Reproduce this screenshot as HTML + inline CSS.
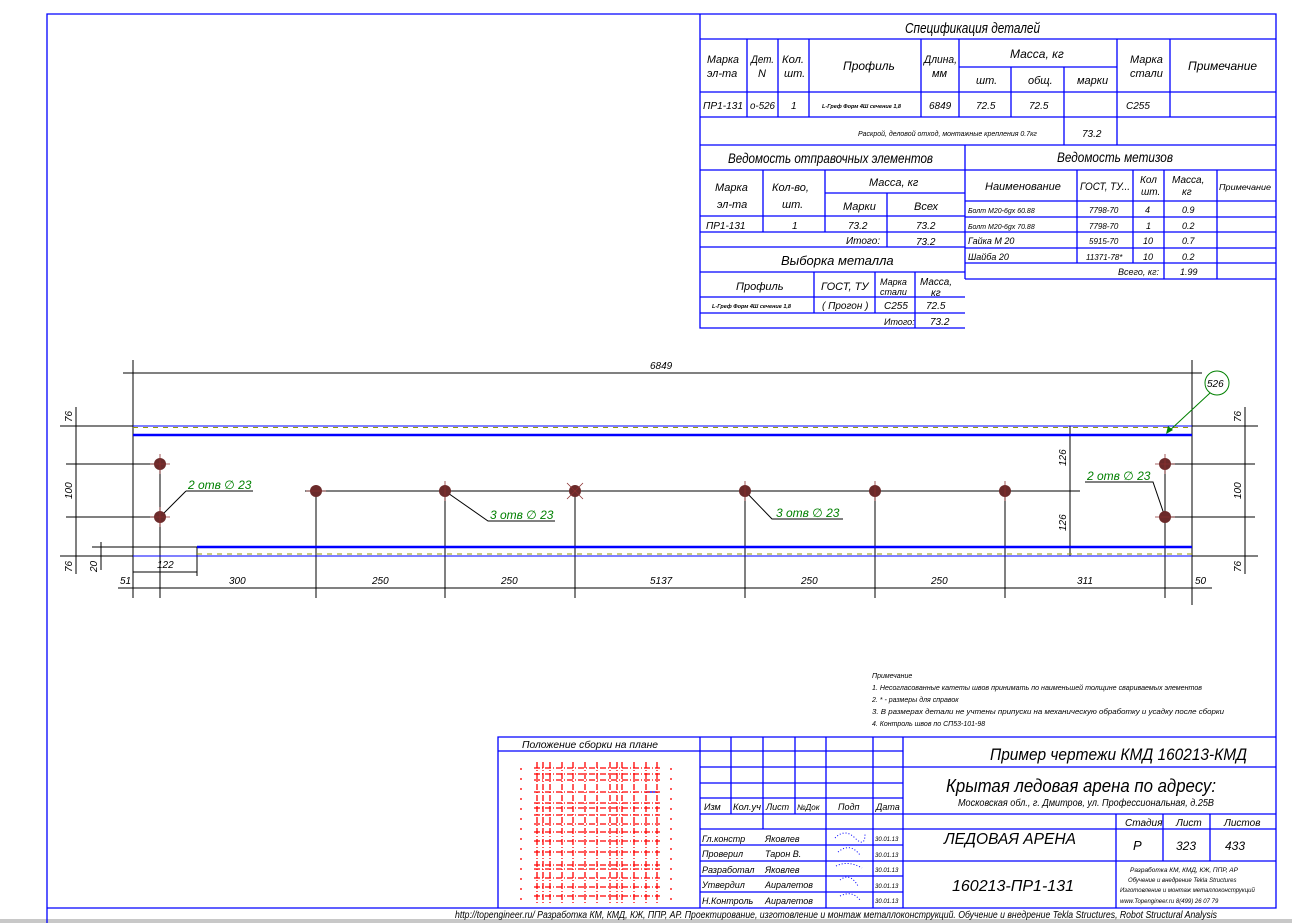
<!DOCTYPE html>
<html><head><meta charset="utf-8"><style>
html,body{margin:0;padding:0;background:#fff;}
svg{display:block}
text{font-family:"Liberation Sans","DejaVu Sans",sans-serif;font-style:italic;fill:#000}
.b{stroke:#0000ff;stroke-width:1.3;fill:none}
.k{stroke:#000;stroke-width:1;fill:none}
.r{stroke:#f00;stroke-width:1.3;stroke-dasharray:6 2 1 2;fill:none}
.g{fill:#008000}
</style></head><body>
<svg width="1292" height="923" viewBox="0 0 1292 923" xmlns="http://www.w3.org/2000/svg">
<rect x="0" y="919" width="1292" height="4" fill="#c8c8c8"/>
<path class="b" d="M47 923 V14 H1276 V908 H47"/>
<g class="b">
<path d="M700 14 V328 H965 M700 39 H1276 M700 92 H1276 M700 117 H1276 M700 145 H1276 M959 67 H1117"/>
<path d="M747 39 V117 M778 39 V117 M809 39 V117 M921 39 V117 M959 39 V117 M1011 67 V117 M1064 67 V145 M1117 39 V145 M1170 39 V117"/>
<path d="M965 145 V279 M700 170 H1276"/>
<path d="M700 216 H965 M700 232 H965 M700 247 H965 M700 272 H965 M700 297 H965 M700 313 H965 M825 193 H965"/>
<path d="M763 170 V232 M825 170 V232 M887 193 V247 M814 272 V313 M875 272 V313 M915 272 V328"/>
<path d="M965 201 H1276 M965 217 H1276 M965 232 H1276 M965 248 H1276 M965 263 H1276 M965 279 H1276"/>
<path d="M1077 170 V263 M1133 170 V263 M1164 170 V279 M1217 170 V279"/>
</g>
<g font-size="13">
<text x="905" y="33" font-size="15" textLength="135" lengthAdjust="spacingAndGlyphs">Спецификация деталей</text>
<text x="707" y="63" font-size="11" textLength="32" lengthAdjust="spacingAndGlyphs">Марка</text><text x="707" y="77" font-size="11">эл-та</text>
<text x="751" y="63" font-size="11" textLength="23" lengthAdjust="spacingAndGlyphs">Дет.</text><text x="758" y="77" font-size="11">N</text>
<text x="782" y="63" font-size="11" textLength="22" lengthAdjust="spacingAndGlyphs">Кол.</text><text x="784" y="77" font-size="11">шт.</text>
<text x="843" y="70" font-size="12">Профиль</text>
<text x="924" y="63" font-size="11" textLength="33" lengthAdjust="spacingAndGlyphs">Длина,</text><text x="932" y="77" font-size="11">мм</text>
<text x="1010" y="58" font-size="12">Масса, кг</text>
<text x="976" y="84" font-size="11">шт.</text><text x="1028" y="84" font-size="11">общ.</text><text x="1077" y="84" font-size="11">марки</text>
<text x="1130" y="63" font-size="11">Марка</text><text x="1130" y="77" font-size="11">стали</text>
<text x="1188" y="70" font-size="12">Примечание</text>
<text x="703" y="109" font-size="10" textLength="40" lengthAdjust="spacingAndGlyphs">ПР1-131</text><text x="750" y="109" font-size="10" textLength="25" lengthAdjust="spacingAndGlyphs">о-526</text><text x="791" y="109" font-size="10">1</text>
<text x="822" y="108" font-size="5.5" font-weight="bold">L-Греф Форм 4Ш сечение 1,8</text>
<text x="929" y="109" font-size="10">6849</text><text x="976" y="109" font-size="10">72.5</text><text x="1029" y="109" font-size="10">72.5</text><text x="1126" y="109" font-size="10">С255</text>
<text x="858" y="136" font-size="7">Раскрой, деловой отход, монтажные крепления 0.7кг</text>
<text x="1082" y="137" font-size="10">73.2</text>
<text x="728" y="163" font-size="14" textLength="205" lengthAdjust="spacingAndGlyphs">Ведомость отправочных элементов</text>
<text x="1057" y="162" font-size="14" textLength="116" lengthAdjust="spacingAndGlyphs">Ведомость метизов</text>
<text x="715" y="191" font-size="11">Марка</text><text x="717" y="208" font-size="11">эл-та</text>
<text x="772" y="191" font-size="11">Кол-во,</text><text x="782" y="208" font-size="11">шт.</text>
<text x="869" y="186" font-size="11">Масса, кг</text>
<text x="843" y="210" font-size="11">Марки</text><text x="914" y="210" font-size="11">Всех</text>
<text x="706" y="229" font-size="10">ПР1-131</text><text x="792" y="229" font-size="10">1</text><text x="848" y="229" font-size="10">73.2</text><text x="916" y="229" font-size="10">73.2</text>
<text x="846" y="244" font-size="10">Итого:</text><text x="916" y="245" font-size="10">73.2</text>
<text x="781" y="265" font-size="13">Выборка металла</text>
<text x="736" y="290" font-size="11">Профиль</text>
<text x="821" y="290" font-size="11">ГОСТ, ТУ</text>
<text x="880" y="285" font-size="9">Марка</text><text x="880" y="295" font-size="9">стали</text>
<text x="920" y="285" font-size="10" textLength="32" lengthAdjust="spacingAndGlyphs">Масса,</text><text x="931" y="296" font-size="10">кг</text>
<text x="712" y="308" font-size="5.5" font-weight="bold">L-Греф Форм 4Ш сечение 1,8</text>
<text x="822" y="309" font-size="10">( Прогон )</text><text x="884" y="309" font-size="10">С255</text><text x="926" y="309" font-size="10">72.5</text>
<text x="884" y="325" font-size="9">Итого:</text><text x="930" y="325" font-size="10">73.2</text>
<text x="985" y="190" font-size="11">Наименование</text>
<text x="1080" y="190" font-size="11" textLength="50" lengthAdjust="spacingAndGlyphs">ГОСТ, ТУ...</text>
<text x="1140" y="183" font-size="10">Кол</text><text x="1141" y="195" font-size="10">шт.</text>
<text x="1172" y="183" font-size="10">Масса,</text><text x="1182" y="195" font-size="10">кг</text>
<text x="1219" y="190" font-size="8" textLength="52" lengthAdjust="spacingAndGlyphs">Примечание</text>
<text x="968" y="213" font-size="7">Болт М20-6gх 60.88</text><text x="1089" y="213" font-size="8">7798-70</text><text x="1145" y="213" font-size="9">4</text><text x="1182" y="213" font-size="9">0.9</text>
<text x="968" y="229" font-size="7">Болт М20-6gх 70.88</text><text x="1089" y="229" font-size="8">7798-70</text><text x="1146" y="229" font-size="9">1</text><text x="1182" y="229" font-size="9">0.2</text>
<text x="968" y="244" font-size="9">Гайка М 20</text><text x="1089" y="244" font-size="8">5915-70</text><text x="1143" y="244" font-size="9">10</text><text x="1182" y="244" font-size="9">0.7</text>
<text x="968" y="260" font-size="9">Шайба 20</text><text x="1086" y="260" font-size="8">11371-78*</text><text x="1143" y="260" font-size="9">10</text><text x="1182" y="260" font-size="9">0.2</text>
<text x="1118" y="275" font-size="9">Всего, кг:</text><text x="1180" y="275" font-size="9">1.99</text>
</g>
<g class="k">
<path d="M133 360 V598 M1192 360 V605 M123 373 H1202"/>
<path d="M60 426 H133 M1192 426 H1258 M60 556 H133 M1192 556 H1258"/>
<path d="M76 407 V574 M1245 407 V574 M66 464 H160 M66 517 H160 M1165 464 H1255 M1165 517 H1255"/>
<path d="M305 491 H1080 M1070 426 V556 M1060 426 H1080 M1060 556 H1080"/>
<path d="M92 547 H197 M101 542 V570 M133 572 H197 M197 547 V576"/>
<path d="M118 588 H1212 M160 464 V598 M316 491 V598 M445 491 V598 M575 491 V598 M745 491 V598 M875 491 V598 M1005 491 V598 M1165 464 V598"/>
<path d="M186 491 H253 M186 491 L160 517 M445 491 L488 521 H555 M745 491 L772 519 H843 M1085 482 H1153 L1165 517"/>
</g>
<g stroke="#0000ff" fill="none">
<path d="M133 426 H1192 M133 556 H1192" stroke-width="1"/>
<path d="M133 435 H1192 M197 547 H1192" stroke-width="2.5"/>
</g>
<path d="M133 427.5 H1192 M197 554 H1192" stroke="#9a9a00" stroke-width="1" stroke-dasharray="5 5"/>
<g fill="#6b2a2a">
<circle cx="160" cy="464" r="6"/><circle cx="160" cy="517" r="6"/>
<circle cx="316" cy="491" r="6"/><circle cx="445" cy="491" r="6"/><circle cx="575" cy="491" r="6"/>
<circle cx="745" cy="491" r="6"/><circle cx="875" cy="491" r="6"/><circle cx="1005" cy="491" r="6"/>
<circle cx="1165" cy="464" r="6"/><circle cx="1165" cy="517" r="6"/>
</g>
<g stroke="#8b3030" stroke-width="0.8">
<path d="M150 464 H170 M160 454 V474 M150 517 H170 M160 507 V527 M306 491 H326 M445 481 V501 M745 481 V501 M875 481 V501 M1005 481 V501 M567 483 L583 499 M583 483 L567 499 M1155 464 H1175 M1165 454 V474 M1155 517 H1175"/>
</g>
<g font-size="10" font-style="normal">
<text x="650" y="369">6849</text>
<text x="120" y="584">51</text><text x="157" y="568">122</text><text x="229" y="584">300</text>
<text x="372" y="584">250</text><text x="501" y="584">250</text><text x="650" y="584">5137</text>
<text x="801" y="584">250</text><text x="931" y="584">250</text><text x="1077" y="584">311</text><text x="1195" y="584">50</text>
<text transform="translate(72,422) rotate(-90)">76</text>
<text transform="translate(72,499) rotate(-90)">100</text>
<text transform="translate(72,572) rotate(-90)">76</text>
<text transform="translate(97,572) rotate(-90)">20</text>
<text transform="translate(1241,422) rotate(-90)">76</text>
<text transform="translate(1241,499) rotate(-90)">100</text>
<text transform="translate(1241,572) rotate(-90)">76</text>
<text transform="translate(1066,466) rotate(-90)">126</text>
<text transform="translate(1066,531) rotate(-90)">126</text>
</g>
<g font-size="12" font-style="normal">
<text x="188" y="489" class="g">2 отв ∅ 23</text>
<text x="490" y="519" class="g">3 отв ∅ 23</text>
<text x="776" y="517" class="g">3 отв ∅ 23</text>
<text x="1087" y="480" class="g">2 отв ∅ 23</text>
</g>
<circle cx="1217" cy="383" r="12" fill="none" stroke="#008000"/>
<text x="1207" y="387" font-size="10" font-style="normal">526</text>
<path d="M1210 393 L1168 432" stroke="#008000"/>
<path d="M1166 434 L1168 426 L1173 430 Z" fill="#008000"/>
<g font-size="7">
<text x="872" y="678">Примечание</text>
<text x="872" y="690" textLength="330" lengthAdjust="spacingAndGlyphs">1. Несогласованные катеты швов принимать по наименьшей толщине свариваемых элементов</text>
<text x="872" y="702">2. * - размеры для справок</text>
<text x="872" y="714" textLength="352" lengthAdjust="spacingAndGlyphs">3. В размерах детали не учтены припуски на механическую обработку и усадку после сборки</text>
<text x="872" y="726">4. Контроль швов по СП53-101-98</text>
</g>
<g class="b">
<path d="M498 908 V737 H1276 M498 751 H700 M700 737 V908 M903 737 V908"/>
<path d="M700 751 H903 M700 767 H1276 M700 783 H903 M700 798 H903 M700 814 H1276 M700 829 H1276 M700 845 H903 M700 861 H1276 M700 876 H903 M700 892 H903"/>
<path d="M731 737 V814 M763 737 V829 M795 737 V814 M826 737 V908 M873 737 V908 M1116 814 V908 M1163 814 V861 M1210 814 V861"/>
</g>
<path d="M646 792 H657" stroke="#0000ff" stroke-width="1.3"/>
<g font-size="10">
<text x="522" y="748" textLength="136" lengthAdjust="spacingAndGlyphs">Положение сборки на плане</text>
<text x="704" y="810" font-size="9">Изм</text><text x="733" y="810" font-size="9" textLength="28" lengthAdjust="spacingAndGlyphs">Кол.уч</text><text x="766" y="810" font-size="9">Лист</text><text x="797" y="810" font-size="8">№Док</text><text x="838" y="810" font-size="9">Подп</text><text x="876" y="810" font-size="9">Дата</text>
<text x="702" y="842" font-size="9">Гл.констр</text><text x="765" y="842" font-size="9">Яковлев</text>
<text x="702" y="857" font-size="9">Проверил</text><text x="765" y="857" font-size="9">Тарон В.</text>
<text x="702" y="873" font-size="9">Разработал</text><text x="765" y="873" font-size="9">Яковлев</text>
<text x="702" y="888" font-size="9">Утвердил</text><text x="765" y="888" font-size="9">Аиралетов</text>
<text x="702" y="904" font-size="9">Н.Контроль</text><text x="765" y="904" font-size="9">Аиралетов</text>
<text x="875" y="841" font-size="6">30.01.13</text><text x="875" y="857" font-size="6">30.01.13</text><text x="875" y="872" font-size="6">30.01.13</text><text x="875" y="888" font-size="6">30.01.13</text><text x="875" y="903" font-size="6">30.01.13</text>
<text x="990" y="760" font-size="17" textLength="257" lengthAdjust="spacingAndGlyphs">Пример чертежи КМД  160213-КМД</text>
<text x="946" y="792" font-size="18" textLength="270" lengthAdjust="spacingAndGlyphs">Крытая ледовая арена по адресу:</text>
<text x="958" y="806" font-size="10" textLength="256" lengthAdjust="spacingAndGlyphs">Московская обл., г. Дмитров, ул. Профессиональная, д.25В</text>
<text x="944" y="844" font-size="16" textLength="132" lengthAdjust="spacingAndGlyphs">ЛЕДОВАЯ АРЕНА</text>
<text x="952" y="891" font-size="16" textLength="122" lengthAdjust="spacingAndGlyphs">160213-ПР1-131</text>
<text x="1125" y="826" font-size="10">Стадия</text><text x="1176" y="826" font-size="10">Лист</text><text x="1224" y="826" font-size="10">Листов</text>
<text x="1133" y="850" font-size="13">Р</text><text x="1176" y="850" font-size="12">323</text><text x="1225" y="850" font-size="12">433</text>
<text x="1130" y="872" font-size="6.5">Разработка КМ, КМД, КЖ, ППР, АР</text>
<text x="1128" y="882" font-size="6">Обучение и внедрение Tekla Structures</text>
<text x="1120" y="892" font-size="6">Изготовление и монтаж металлоконструкций</text>
<text x="1120" y="903" font-size="6">www.Topengineer.ru             8(499) 26 07 79</text>
</g>
<text x="455" y="918" font-size="10" textLength="762" lengthAdjust="spacingAndGlyphs">http://topengineer.ru/  Разработка КМ, КМД, КЖ, ППР, АР. Проектирование, изготовление и монтаж металлоконструкций. Обучение и внедрение Tekla Structures, Robot Structural Analysis</text>
<g stroke="#0000ff" stroke-width="1" stroke-dasharray="1 2" fill="none">
<path d="M835 838 Q845 828 855 838 T865 834 M838 852 Q850 842 860 855 M836 866 Q848 860 862 868 M840 880 Q850 872 858 886 M840 896 Q852 890 860 900"/>
</g>
<g class="r">
<path d="M537 762 V903 M543 762 V903 M550 762 V903 M562 762 V903 M573 762 V903 M585 762 V903 M597 762 V903 M610 762 V903 M617 762 V903 M622 762 V903 M634 762 V903 M646 762 V903 M657 762 V903"/>
<path d="M534 768 H660 M534 774 H660 M534 780 H660 M534 792 H660 M534 803 H660 M534 808 H660 M534 815 H660 M534 824 H660 M534 832 H660 M534 841 H660 M534 852 H660 M534 865 H660 M534 869 H660 M534 878 H660 M534 887 H660 M534 896 H660"/>
<path d="M521 768 V900 M671 768 V900" stroke-dasharray="2 8"/>
</g>
</svg>
</body></html>
